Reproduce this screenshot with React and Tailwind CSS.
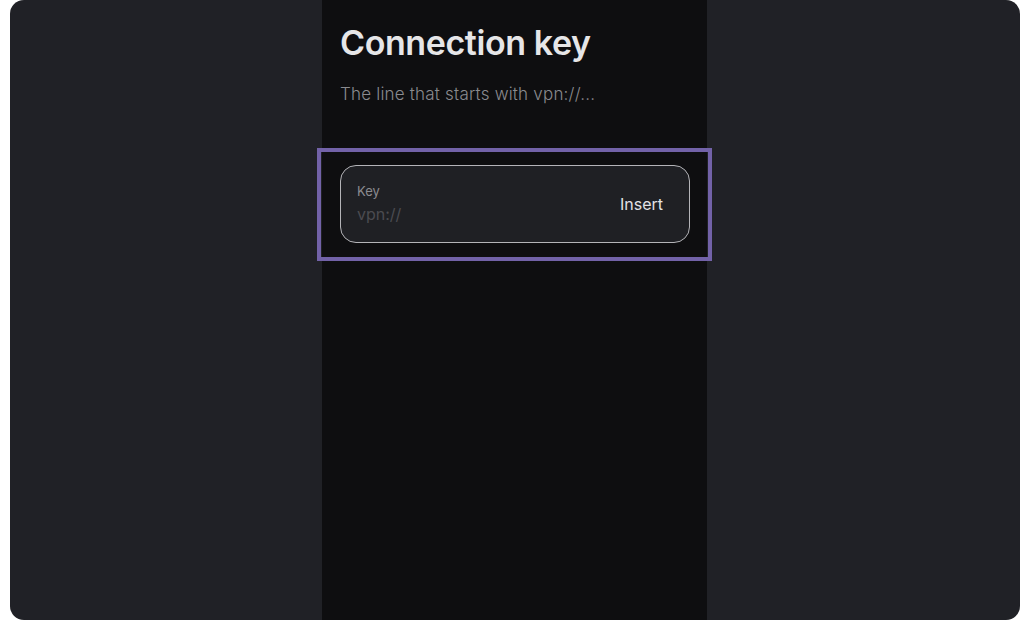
import React from "react";

function KeyField() {
  return (
    <div className="-ml-[23px] -mr-[22px] mt-[42px] border-4 border-[#7262a8] pl-[19px] pr-[18px] pt-[13px] pb-[14px]">
      <div className="flex items-center h-[78px] rounded-[16px] border border-[#b4b4b8] bg-[#1f2024] pl-4 pr-[26px]">
        <div className="flex-1 flex flex-col">
          <span className="text-[13px] leading-4 text-[#8b8b90]">Key</span>
          <span className="mt-[3px] text-[16px] leading-6 text-[#4b4b50]">vpn://</span>
        </div>
        <button className="text-[16px] leading-6 text-[#e2e2e4]">Insert</button>
      </div>
    </div>
  );
}

export default function App() {
  return (
    <div className="w-[1030px] h-[620px] bg-white px-[10px] flex" style={{ fontFamily: "Inter, 'Noto Sans', sans-serif" }}>
      <div className="flex-1 flex rounded-[14px] overflow-hidden bg-[#202126]">
        <div className="w-[312px]" />
        <div className="w-[385px] bg-[#0e0e10] pl-[18px] pr-[17px] pt-[23px]">
          <h1 className="text-[34px] leading-10 font-semibold tracking-[-0.4px] text-[#e6e6e8]">Connection key</h1>
          <p className="mt-[19px] text-[17px] leading-6 font-light tracking-[0.2px] text-[#8a8a8f]">The line that starts with vpn://...</p>
          <KeyField />
        </div>
        <div className="flex-1" />
      </div>
    </div>
  );
}
